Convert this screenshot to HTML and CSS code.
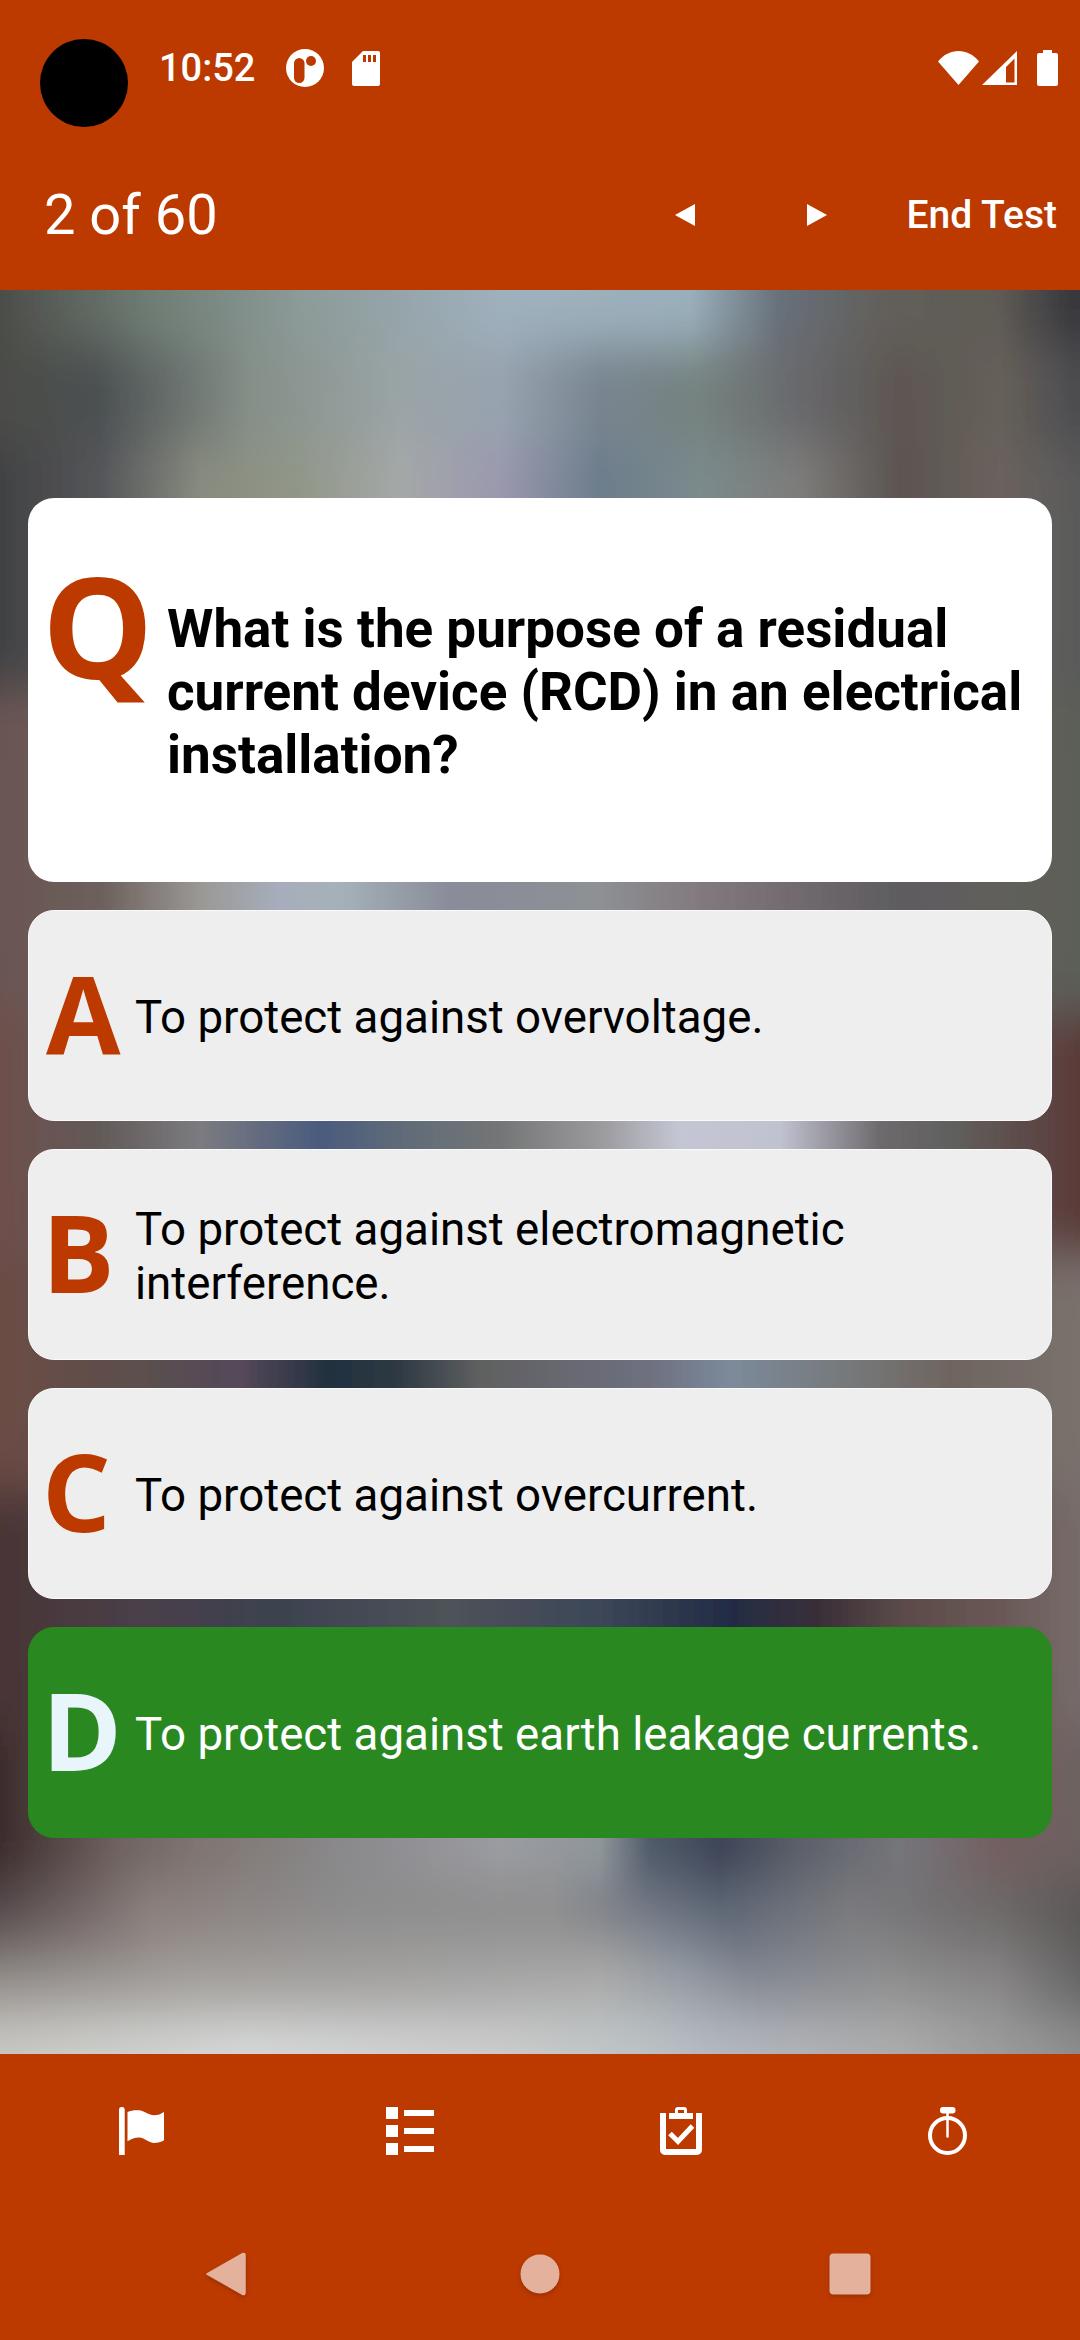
FILE: index.html
```html
<!DOCTYPE html>
<html lang="en">
<head>
    <meta charset="UTF-8">
    <meta name="viewport" content="width=device-width, initial-scale=1.0">
    <title>Test Question</title>
    <link rel="stylesheet" href="styles.css">
</head>
<body>
    <svg class="filter-defs" aria-hidden="true">
        <filter id="soften" x="0" y="-5%" width="100%" height="110%">
            <feGaussianBlur stdDeviation="0 24"/>
        </filter>
    </svg>
    <div class="camera-hole"></div>
    <header>
        <div class="status-bar">
            <span class="status-time">10:52</span>
            <svg class="status-logo" viewBox="0 0 38 38">
                <circle cx="19" cy="19" r="19" fill="#fff"/>
                <rect x="8" y="9" width="10.5" height="25" rx="5.25" fill="#bc3a00"/>
                <circle cx="25" cy="12" r="5" fill="#bc3a00"/>
            </svg>
            <svg class="status-sd" viewBox="0 0 28 35">
                <path d="M11 0H26a2 2 0 0 1 2 2V33a2 2 0 0 1-2 2H2a2 2 0 0 1-2-2V11z" fill="#fff"/>
                <path d="M11 4h3v7h-3zM16 4h3v7h-3zM21 4h3v7h-3z" fill="#bc3a00"/>
            </svg>
            <div class="status-right">
                <svg class="status-wifi" viewBox="0 0 41 34">
                    <path d="M0 10.5C5.500 3.500 13 0 20.500 0S35.500 3.500 41 10.500L20.500 34z" fill="#fff"/>
                </svg>
                <svg class="status-signal" viewBox="0 0 35 34">
                    <path fill-rule="evenodd" d="M35 0V34H0zM32.500 7.500L24 16V31.500H32.500z" fill="#fff"/>
                </svg>
                <svg class="status-battery" viewBox="0 0 21 36">
                    <path d="M6 0H15V3H19a2 2 0 0 1 2 2V34a2 2 0 0 1-2 2H2a2 2 0 0 1-2-2V5a2 2 0 0 1 2-2H6z" fill="#fff"/>
                </svg>
            </div>
        </div>
        <div class="toolbar">
            <h1 class="question-count">2 of 60</h1>
            <div class="arrow arrow-prev"></div>
            <div class="arrow arrow-next"></div>
            <a href="#" class="end-test">End Test</a>
        </div>
    </header>

    <main>
        <div class="backdrop">
            <div class="band band-1"></div>
            <div class="band band-2"></div>
            <div class="band band-3"></div>
            <div class="band band-4"></div>
            <div class="band band-5"></div>
            <div class="band band-6"></div>
            <div class="band band-7"></div>
            <div class="band band-8"></div>
            <div class="band band-9"></div>
            <div class="band band-9b"></div>
            <div class="band band-10"></div>
            <div class="band band-11"></div>
        </div>
        <div class="question-card">
            <span class="question-letter">Q</span>
            <p class="question-text">What is the purpose of a residual current device (RCD) in an electrical installation?</p>
        </div>
        <div class="answer-card">
            <span class="answer-letter letter-a">A</span>
            <p class="answer-text">To protect against overvoltage.</p>
        </div>
        <div class="answer-card">
            <span class="answer-letter">B</span>
            <p class="answer-text">To protect against electromagnetic interference.</p>
        </div>
        <div class="answer-card">
            <span class="answer-letter">C</span>
            <p class="answer-text">To protect against overcurrent.</p>
        </div>
        <div class="answer-card correct">
            <span class="answer-letter">D</span>
            <p class="answer-text">To protect against earth leakage currents.</p>
        </div>
    </main>

    <footer>
        <div class="tab-bar">
            <div class="tab">
                <svg class="tab-icon" viewBox="0 0 46 48">
                    <path d="M0 2.500a2.800 2.500 0 0 1 5.700 0V48H0z" fill="#fff"/>
                    <path d="M8.500 5C12 3.500 16 3 20 3.300C25 3.800 30 8.300 35 8.300C39 8.300 42 7 45 5V33.300C42 35 39 36 35 36C30 36 25 30.600 20 30.600C16 30.600 12 32 8.500 34.300z" fill="#fff"/>
                </svg>
            </div>
            <div class="tab">
                <svg class="tab-icon" viewBox="0 0 48 48">
                    <path d="M0 0h12v12H0zM0 18h12v12H0zM0 36h12v12H0zM18 3h30v6H18zM18 21h30v6H18zM18 39h30v6H18z" fill="#fff"/>
                </svg>
            </div>
            <div class="tab">
                <svg class="tab-icon" viewBox="0 0 42 48">
                    <path d="M0 6H6V42H36V6H42V43a5 5 0 0 1-5 5H5a5 5 0 0 1-5-5z" fill="#fff"/>
                    <path fill-rule="evenodd" d="M9 6H15V3a3 3 0 0 1 3-3H24a3 3 0 0 1 3 3V6H33V12H9zM18 3V6H24V3z" fill="#fff"/>
                    <path d="M10 26.500L18 34.500L32.500 19" fill="none" stroke="#fff" stroke-width="5"/>
                </svg>
            </div>
            <div class="tab">
                <svg class="tab-icon" viewBox="0 0 39 48">
                    <rect x="12" y="0" width="15.500" height="6.500" rx="3" fill="#fff"/>
                    <circle cx="19.500" cy="28.500" r="17.500" fill="none" stroke="#fff" stroke-width="4"/>
                    <path d="M19.500 4V29.500" stroke="#fff" stroke-width="2.500" stroke-linecap="round"/>
                </svg>
            </div>
        </div>
        <div class="nav-bar">
            <svg class="nav-icon" viewBox="0 0 60 60">
                <path d="M11 30L47 9.500a1.500 1.500 0 0 1 2 1.500V49a1.500 1.500 0 0 1-2 1.500z" stroke="#e4b19c" stroke-width="1.500" stroke-linejoin="round" fill="#e4b19c"/>
            </svg>
            <svg class="nav-icon" viewBox="0 0 60 60">
                <circle cx="30" cy="30" r="19.500" fill="#e4b19c"/>
            </svg>
            <svg class="nav-icon" viewBox="0 0 60 60">
                <rect x="9.500" y="9.500" width="41" height="41" rx="4" fill="#e4b19c"/>
            </svg>
        </div>
    </footer>
</body>
</html>
```

FILE: styles.css
```css
* {
    box-sizing: border-box;
    margin: 0;
    padding: 0;
}
body {
    width: 1080px;
    height: 2340px;
    display: flex;
    flex-direction: column;
    position: relative;
    overflow: hidden;
    font-family: Roboto, sans-serif;
    background-color: #bc3a00;
    color: #fff;
}
.filter-defs {
    position: absolute;
    width: 0;
    height: 0;
}
.camera-hole {
    position: absolute;
    top: 39px;
    left: 40px;
    width: 88px;
    height: 88px;
    border-radius: 50%;
    background-color: #000;
}
header {
    height: 290px;
    flex-shrink: 0;
    background-color: #bc3a00;
}
.status-bar {
    height: 140px;
    padding: 0 22px 4px 159px;
    display: flex;
    align-items: center;
}
.status-time {
    font-size: 38px;
    font-weight: 500;
    width: 127px;
}
.status-logo {
    width: 38px;
    height: 38px;
    margin-right: 28px;
}
.status-sd {
    width: 28px;
    height: 35px;
}
.status-right {
    margin-left: auto;
    display: flex;
    align-items: center;
}
.status-wifi {
    width: 41px;
    height: 34px;
    margin-right: 3px;
}
.status-signal {
    width: 35px;
    height: 34px;
    margin-right: 20px;
}
.status-battery {
    width: 21px;
    height: 36px;
}
.toolbar {
    height: 150px;
    padding: 0 23px 0 44px;
    display: flex;
    align-items: center;
}
.question-count {
    font-size: 56px;
    font-weight: 400;
}
.arrow {
    width: 0;
    height: 0;
    border-top: 11.5px solid transparent;
    border-bottom: 11.5px solid transparent;
}
.arrow-prev {
    margin-left: auto;
    border-right: 20px solid #fff;
}
.arrow-next {
    margin-left: 112px;
    border-left: 20px solid #fff;
}
.end-test {
    margin-left: 80px;
    font-size: 39px;
    font-weight: 500;
    color: #fff;
    text-decoration: none;
}

main {
    flex: 1;
    position: relative;
    overflow: hidden;
    padding: 208px 28px 0;
    display: flex;
    flex-direction: column;
    gap: 28px;
}
/* blurred photo behind the cards, rebuilt from horizontal strips */
.backdrop {
    position: absolute;
    top: -120px;
    left: 0;
    right: 0;
    display: flex;
    flex-direction: column;
    filter: url(#soften);
}
.band-1 {
    height: 175px;
    background: linear-gradient(to right, #4c4d49 0, #6f7d74 150px, #8c9a98 300px, #9fb0bd 500px, #9aafbb 690px, #67707a 780px, #63605b 880px, #5f5a55 1000px, #38393d 1070px);
}
.band-2 {
    height: 100px;
    background: linear-gradient(to right, #4b4c48 0, #4c5152 100px, #858f88 250px, #9aa4a6 400px, #97a3af 500px, #788590 600px, #75827f 700px, #68686c 800px, #5d5652 900px, #66605a 1000px, #4d4d50 1075px);
}
.band-3 {
    height: 245px;
    background: linear-gradient(to right, #414244 0, #55565a 100px, #888b7f 200px, #919788 300px, #a5a8a8 400px, #9a98ae 500px, #6c7d8c 600px, #7b8a8c 700px, #7d7c7a 800px, #5b5450 900px, #6b625d 1000px, #5a5a5a 1075px);
}
.band-4 {
    height: 325px;
    background: linear-gradient(to right, #6b5553 0, #6c5f5c 100px, #9a9894 200px, #a7adbc 280px, #a5b1b8 340px, #898c9a 450px, #8d9094 600px, #82797e 700px, #70696e 800px, #5e5c60 900px, #605e5b 1000px, #5c5f58 1080px);
}
.band-5 {
    height: 240px;
    background: linear-gradient(to right, #6e4f4c 0, #625a58 100px, #7b7b80 200px, #4a5b7d 320px, #5f6b78 400px, #747576 500px, #9a9a9c 600px, #c4c6d4 680px, #c0c2d0 780px, #6e696d 880px, #60605e 950px, #5a3a38 1080px);
}
.band-6 {
    height: 235px;
    background: linear-gradient(to right, #6c4c44 0, #5a4f4e 150px, #55485a 240px, #20303e 330px, #2e3a44 400px, #5f6060 480px, #6e7080 650px, #7b8a9a 730px, #76787a 850px, #6e645f 950px, #7a716d 1080px);
}
.band-7 {
    height: 240px;
    background: linear-gradient(to right, #4a3535 0, #48404a 150px, #3c4250 280px, #4e5258 450px, #3c4658 600px, #222c44 730px, #3a2f38 820px, #5a4a48 900px, #6a5856 1000px, #766c6a 1080px);
}
.band-8 {
    height: 150px;
    background: linear-gradient(to right, #3c2c2c 0, #6e625f 120px, #7f7470 200px, #8a8a8d 350px, #9b9ca2 500px, #8f979b 600px, #4f5a68 650px, #3c4356 720px, #5a5f68 800px, #75757b 900px, #735f60 1000px, #6d6260 1080px);
}
.band-9 {
    height: 55px;
    background: linear-gradient(to right, #55484a 0, #8a7f7c 150px, #8c8c8c 350px, #8e8d8d 550px, #6f7583 650px, #5c6574 720px, #7a7a7e 850px, #6c6868 1000px, #5b5656 1080px);
}
.band-9b {
    height: 40px;
    background: linear-gradient(to right, #7a7270 0, #9a9390 175px, #9b9a99 375px, #9f9f9f 600px, #88909a 680px, #757c88 740px, #878789 875px, #7c7979 1000px, #636161 1080px);
}
.band-10 {
    height: 45px;
    background: linear-gradient(to right, #a09c98 0, #aaa8a4 200px, #aaa9a8 400px, #b0b0b0 600px, #a0a5ac 680px, #8e929a 760px, #949494 900px, #8c8a8a 1000px, #6b6b6b 1080px);
}
.band-11 {
    height: 200px;
    background: linear-gradient(to right, #c8c7c3 0, #d6d8d8 250px, #cccccc 500px, #bcc4c6 640px, #b4b8c1 720px, #acacac 900px, #8e8e8e 1080px);
}

.question-card {
    position: relative;
    height: 384px;
    flex-shrink: 0;
    padding: 4px 16px 0 0;
    background-color: #fff;
    border-radius: 26px;
    display: flex;
    align-items: center;
    color: #000;
}
.question-letter {
    width: 139px;
    flex-shrink: 0;
    align-self: flex-start;
    margin-top: 28px;
    padding-left: 14px;
    font-family: "Open Sans", sans-serif;
    font-size: 140px;
    font-weight: 700;
    line-height: 190px;
    color: #bc3a00;
}
.question-text {
    font-size: 53px;
    font-weight: 700;
    line-height: 63px;
}
.answer-card {
    position: relative;
    height: 211px;
    flex-shrink: 0;
    padding-right: 24px;
    background-color: #eee;
    border: 1px solid #fafafa;
    border-radius: 26px;
    display: flex;
    align-items: center;
    color: #000;
}
.answer-letter {
    width: 106px;
    flex-shrink: 0;
    margin-bottom: 5px;
    padding-left: 13px;
    font-family: "Open Sans", sans-serif;
    font-size: 108px;
    font-weight: 700;
    line-height: 120px;
    color: #bc3a00;
}
.letter-a {
    padding-left: 17px;
}
.answer-text {
    padding-top: 5px;
    font-size: 45.7px;
    line-height: 54px;
}
.answer-card.correct {
    background-color: #298820;
    border-color: #298820;
    color: #fff;
}
.correct .answer-letter {
    color: #e8f5fb;
}

footer {
    height: 286px;
    flex-shrink: 0;
    background-color: #bc3a00;
}
.tab-bar {
    height: 154px;
    padding-left: 8px;
    display: grid;
    grid-template-columns: 268px 268px 274px 258px;
}
.tab {
    display: flex;
    align-items: center;
    justify-content: center;
}
.tab-icon {
    height: 48px;
}
.nav-bar {
    height: 132px;
    padding-left: 196px;
    display: grid;
    grid-template-columns: 314px 310px 60px;
    align-items: center;
}
.nav-icon {
    width: 60px;
    height: 60px;
    filter: drop-shadow(0 2px 2px rgba(90, 30, 0, 0.35));
}
```
